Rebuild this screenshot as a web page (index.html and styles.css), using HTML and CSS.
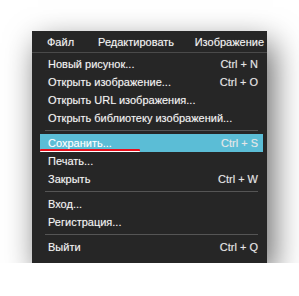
FILE: index.html
```html
<!DOCTYPE html>
<html lang="ru">
<head>
    <meta charset="UTF-8">
    <title>Меню Файл</title>
    <link rel="stylesheet" href="styles.css">
</head>
<body>
    <div class="menu">
        <div class="menu-bar">
            <span class="bar-item bar-file">Файл</span>
            <span class="bar-item bar-edit">Редактировать</span>
            <span class="bar-item bar-image">Изображение</span>
        </div>
        <ul class="menu-list">
            <li class="item"><span>Новый рисунок...</span><span class="key">Ctrl + N</span></li>
            <li class="item"><span>Открыть изображение...</span><span class="key">Ctrl + O</span></li>
            <li class="item"><span>Открыть URL изображения...</span></li>
            <li class="item"><span>Открыть библиотеку изображений...</span></li>
            <li class="sep"></li>
            <li class="item active"><span>Сохранить...</span><span class="key">Ctrl + S</span><i class="mark"></i></li>
            <li class="item"><span>Печать...</span></li>
            <li class="item"><span>Закрыть</span><span class="key">Ctrl + W</span></li>
            <li class="sep"></li>
            <li class="item"><span>Вход...</span></li>
            <li class="item"><span>Регистрация...</span></li>
            <li class="sep"></li>
            <li class="item"><span>Выйти</span><span class="key">Ctrl + Q</span></li>
        </ul>
    </div>
</body>
</html>
```

FILE: styles.css
```css
body {
    margin: 0;
    background-color: #fff;
    font-family: "Liberation Sans", Arial, sans-serif;
    font-size: 11px;
}

.menu {
    margin: 31px 0 0 32px;
    width: 235px;
    height: 232px;
    background-color: #262626;
    box-shadow: 6px 12px 30px rgba(0,0,0,0.6);
    color: #f4f4f4;
    text-shadow: 0 0 1px rgba(255,255,255,0.35);
}

.menu-bar {
    display: flex;
    height: 22px;
    align-items: center;
    border-bottom: 1px solid #4a4a4a;
    box-sizing: border-box;
}

.bar-file { margin-left: 15px; }
.bar-edit { margin-left: 24px; }
.bar-image { margin-left: auto; margin-right: 3px; }

.menu-list {
    list-style: none;
    margin: 0;
    padding: 2px 4px 0 8px;
}

.item {
    position: relative;
    display: flex;
    justify-content: space-between;
    align-items: center;
    height: 18px;
    padding: 0 5px 0 8px;
}

.key {
    color: #e6e6e6;
}

.item.active {
    background-color: #5bbdd6;
    color: #fff;
}

.mark {
    position: absolute;
    left: 0;
    bottom: 0;
    width: 100px;
    height: 2px;
    background-color: #e8101c;
    border-bottom: 1px solid #fff;
    border-radius: 1px;
}

.sep {
    height: 1px;
    margin: 3px 5px;
    background-color: #555;
}
```
